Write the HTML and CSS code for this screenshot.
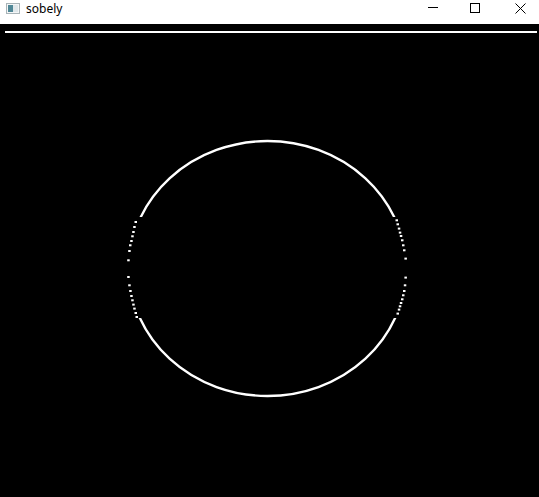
FILE: index.html
```html
<!DOCTYPE html>
<html>
<head>
<meta charset="utf-8">
<title>sobely</title>
<link rel="stylesheet" href="styles.css">
</head>
<body>
<div class="window">
  <div class="titlebar">
    <svg class="app-icon" width="14" height="11" viewBox="0 0 14 11">
      <rect x="0.5" y="0.5" width="13" height="10" fill="#f4f6f7" stroke="#a9b4b8"/>
      <rect x="2" y="2" width="5" height="7" fill="#4f8796"/>
      <rect x="7" y="2" width="5" height="7" fill="#dfe7ea"/>
    </svg>
    <span class="title">sobely</span>
    <div class="controls">
      <svg class="ctl ctl-min" width="10" height="10" viewBox="0 0 10 10"><line x1="0" y1="4.5" x2="10" y2="4.5" stroke="#000" stroke-width="1"/></svg>
      <svg class="ctl ctl-max" width="10" height="10" viewBox="0 0 10 10"><rect x="0.5" y="0.5" width="9" height="9" fill="none" stroke="#000" stroke-width="1"/></svg>
      <svg class="ctl ctl-close" width="11" height="11" viewBox="0 0 11 11"><path d="M0.5 0.5 L10.5 10.5 M10.5 0.5 L0.5 10.5" stroke="#000" stroke-width="1" fill="none"/></svg>
    </div>
  </div>
  <div class="canvas">
    <svg class="image" width="539" height="473" viewBox="0 24 539 473">
      <defs>
        <clipPath id="solid-part">
          <rect x="0" y="24" width="539" height="193"/>
          <rect x="0" y="318" width="539" height="179"/>
        </clipPath>
      </defs>
      <rect x="5" y="31" width="532" height="2" fill="#fff"/>
      <ellipse cx="267.5" cy="268.5" rx="138.5" ry="127.5" fill="none" stroke="#fff" stroke-width="2.4" clip-path="url(#solid-part)"/>
      <g fill="#fff">
        <rect x="134.5" y="221" width="2.5" height="2"/>
        <rect x="133.2" y="226" width="2.5" height="2"/>
        <rect x="132.2" y="231" width="2.5" height="2"/>
        <rect x="131.2" y="235.3" width="2.5" height="2"/>
        <rect x="130.2" y="240" width="2.5" height="2"/>
        <rect x="129" y="244.3" width="2.5" height="2"/>
        <rect x="128.2" y="250" width="2.5" height="2"/>
        <rect x="127.2" y="259.3" width="2.5" height="2"/>
        <rect x="127.2" y="276" width="2.5" height="2"/>
        <rect x="128.2" y="284.3" width="2.5" height="2"/>
        <rect x="129.2" y="290" width="2.5" height="2"/>
        <rect x="130.2" y="295" width="2.5" height="2"/>
        <rect x="131.2" y="299.3" width="2.5" height="2"/>
        <rect x="132.2" y="303.6" width="2.5" height="2"/>
        <rect x="133.2" y="307.6" width="2.5" height="2"/>
        <rect x="134.5" y="312" width="2.5" height="2"/>
        <rect x="135.5" y="316" width="2.5" height="2"/>

        <rect x="395.5" y="219.3" width="2.5" height="2"/>
        <rect x="396.5" y="223.3" width="2.5" height="2"/>
        <rect x="397.8" y="227.6" width="2.5" height="2"/>
        <rect x="398.8" y="231.6" width="2.5" height="2"/>
        <rect x="399.8" y="235" width="2.5" height="2"/>
        <rect x="401" y="239.3" width="2.5" height="2"/>
        <rect x="402" y="244.3" width="2.5" height="2"/>
        <rect x="403" y="249.3" width="2.5" height="2"/>
        <rect x="404.4" y="257.6" width="2.5" height="2"/>
        <rect x="404.4" y="276.6" width="2.5" height="2"/>
        <rect x="403.8" y="284.3" width="2.5" height="2"/>
        <rect x="403" y="290" width="2.5" height="2"/>
        <rect x="402" y="294.3" width="2.5" height="2"/>
        <rect x="401" y="298.3" width="2.5" height="2"/>
        <rect x="399.8" y="302" width="2.5" height="2"/>
        <rect x="398.8" y="305.3" width="2.5" height="2"/>
        <rect x="397.8" y="308.6" width="2.5" height="2"/>
        <rect x="396.5" y="312.6" width="2.5" height="2"/>
      </g>
    </svg>
  </div>
</div>
</body>
</html>
```

FILE: styles.css
```css
html, body {
  margin: 0;
  padding: 0;
  background: #000;
}

.window {
  width: 539px;
  height: 497px;
  display: flex;
  flex-direction: column;
  overflow: hidden;
}

.titlebar {
  height: 24px;
  flex: 0 0 24px;
  background: #fff;
  display: flex;
  align-items: flex-start;
  padding: 3px 13px 0 6px;
  box-sizing: border-box;
}

.app-icon {
  display: block;
  flex: 0 0 auto;
}

.title {
  margin-left: 6px;
  margin-top: -2px;
  font-family: "Noto Sans", "Open Sans", sans-serif;
  font-size: 12px;
  line-height: 16px;
  color: #000;
}

.controls {
  margin-left: auto;
  display: flex;
  align-items: flex-start;
}

.ctl {
  display: block;
}

.ctl-max {
  margin-left: 32px;
}

.ctl-close {
  margin-left: 35px;
}

.canvas {
  flex: 1 1 auto;
  background: #000;
}

.image {
  display: block;
}
```
